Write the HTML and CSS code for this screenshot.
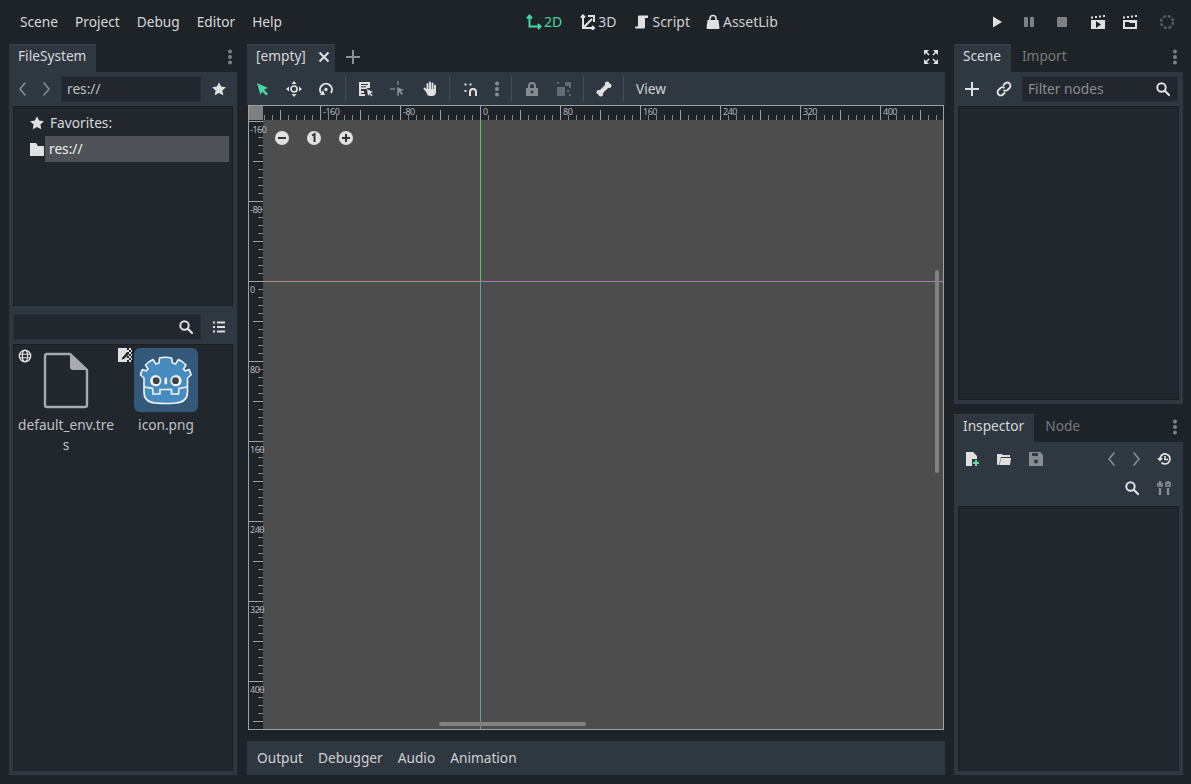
FILE: index.html
```html
<!DOCTYPE html>
<html lang="en">
<head>
  <meta charset="UTF-8" />
  <title>Godot Engine</title>
  <link rel="stylesheet" href="styles.css">
</head>
<body>

<svg class="defs" width="0" height="0">
  <defs>
    <symbol id="i-star" viewBox="0 0 16 16"><path d="M8 1.200l2.100 4.400 4.800.6-3.500 3.300.9 4.800L8 11.900l-4.300 2.400.9-4.800L1.100 6.200l4.800-.6z" fill="#e0e0e0"/></symbol>
    <symbol id="i-search" viewBox="0 0 16 16"><circle cx="6.500" cy="6.500" r="4.200" fill="none" stroke="#e0e0e0" stroke-width="2"/><path d="M9.800 9.800l4.200 4.200" stroke="#e0e0e0" stroke-width="2.200" stroke-linecap="round"/></symbol>
    <symbol id="i-left" viewBox="0 0 16 16"><path d="M10 2L5 8l5 6" fill="none" stroke="#e0e0e0" stroke-width="1.600" stroke-linecap="round" stroke-linejoin="round"/></symbol>
    <symbol id="i-right" viewBox="0 0 16 16"><path d="M6 2l5 6-5 6" fill="none" stroke="#e0e0e0" stroke-width="1.600" stroke-linecap="round" stroke-linejoin="round"/></symbol>
    <symbol id="i-dots" viewBox="0 0 16 16"><circle cx="8" cy="2.600" r="2" fill="#e0e0e0"/><circle cx="8" cy="8" r="2" fill="#e0e0e0"/><circle cx="8" cy="13.400" r="2" fill="#e0e0e0"/></symbol>
    <symbol id="i-arrow" viewBox="0 0 16 16"><path d="M3 2l11 5-4 1.800 4 4-1.800 1.700-4-4L6.500 14z" fill="currentColor"/></symbol>
  </defs>
</svg>

<header class="topbar">
  <nav class="menus">
    <span>Scene</span><span>Project</span><span>Debug</span><span>Editor</span><span>Help</span>
  </nav>
  <nav class="modes">
    <span class="mode active">
      <svg width="16" height="16" viewBox="0 0 16 16"><path d="M3.500 3v9.500H14M1 4.500l2.500-3 2.500 3M12 10l2.500 2.500L12 15" fill="none" stroke="#45d7a0" stroke-width="2"/></svg>2D</span>
    <span class="mode">
      <svg width="16" height="16" viewBox="0 0 16 16"><path d="M3 3v11h11M3 14l9-9M1 3.500L3 1.500l2 2M12 12l2 2-2 2M8 2h6v6" fill="none" stroke="#e0e0e0" stroke-width="2"/></svg>3D</span>
    <span class="mode">
      <svg width="16" height="16" viewBox="0 0 16 16"><path d="M5 1.500h9v2.500h-3v9c0 1-.6 1.500-1.500 1.500H2.500C1.500 15 1 14 1 12.500h3V3c0-1 .3-1.500 1-1.500z" fill="#e0e0e0"/></svg>Script</span>
    <span class="mode">
      <svg width="16" height="16" viewBox="0 0 16 16"><path d="M5 6V4.500a3 3 0 0 1 6 0V6" fill="none" stroke="#e0e0e0" stroke-width="1.600"/><path d="M2.500 6h11l1 8a1 1 0 0 1-1 1h-11a1 1 0 0 1-1-1z" fill="#e0e0e0"/></svg>AssetLib</span>
  </nav>
  <div class="play">
    <svg class="ic" width="16" height="16" viewBox="0 0 16 16"><path d="M4 2.500l9 5.500-9 5.500z" fill="#e0e0e0"/></svg>
    <svg class="ic dim" width="16" height="16" viewBox="0 0 16 16"><rect x="3" y="3" width="4" height="10" rx="1" fill="#e0e0e0"/><rect x="9" y="3" width="4" height="10" rx="1" fill="#e0e0e0"/></svg>
    <svg class="ic dim stop" width="16" height="16" viewBox="0 0 16 16"><rect x="3" y="3" width="10" height="10" rx="1" fill="#e0e0e0"/></svg>
    <svg class="ic movie" width="16" height="16" viewBox="0 0 16 16"><path d="M1 6h14v9H1z" fill="#e0e0e0"/><path d="M6 7l5 3.500L6 14z" fill="#1e2328"/><path d="M1 3.500h2M5 3h2M9 2.500h2M13 2h2" stroke="#e0e0e0" stroke-width="2"/></svg>
    <svg class="ic" width="16" height="16" viewBox="0 0 16 16"><path d="M1 6h14v9H1z" fill="#e0e0e0"/><path d="M3 8h4l1 1h5v4H3z" fill="#1e2328"/><path d="M1 3.500h2M5 3h2M9 2.500h2M13 2h2" stroke="#e0e0e0" stroke-width="2"/></svg>
    <svg class="ic spinner" width="16" height="16" viewBox="0 0 16 16"><circle cx="8" cy="8" r="6" fill="none" stroke="#e0e0e0" stroke-width="2.400" stroke-dasharray="3 1.700"/></svg>
  </div>
</header>

<main class="workspace">
  <section class="dock left-dock">
    <div class="tabs">
      <span class="tab current">FileSystem</span>
      <svg class="dots" width="16" height="16"><use href="#i-dots"/></svg>
    </div>
    <div class="panel fs-panel">
      <div class="fs-path">
        <svg class="ic dim" width="16" height="16"><use href="#i-left"/></svg>
        <svg class="ic dim" width="16" height="16"><use href="#i-right"/></svg>
        <div class="field path-field">res://</div>
        <svg class="ic" width="16" height="16"><use href="#i-star"/></svg>
      </div>
      <div class="well tree">
        <div class="tree-row fav">
          <svg width="16" height="16"><use href="#i-star"/></svg><span>Favorites:</span>
        </div>
        <div class="tree-row res">
          <svg width="16" height="16" viewBox="0 0 16 16"><path d="M1 2h6l2 3h6v10H1z" fill="#e0e0e0"/></svg><span class="sel">res://</span>
        </div>
      </div>
      <div class="fs-search">
        <div class="field search-field">
          <svg width="16" height="16"><use href="#i-search"/></svg>
        </div>
        <svg class="ic" width="16" height="16" viewBox="0 0 16 16"><path d="M2 2.500h2v2H2zM2 7h2v2H2zM2 11.500h2v2H2zM6 2.500h8v2H6zM6 7h8v2H6zM6 11.500h8v2H6z" fill="#e0e0e0"/></svg>
      </div>
      <div class="well files">
        <div class="file">
          <div class="thumb">
            <svg class="badge globe" width="14" height="14" viewBox="0 0 16 16"><circle cx="8" cy="8" r="6.500" fill="none" stroke="#e0e0e0" stroke-width="1.600"/><ellipse cx="8" cy="8" rx="3" ry="6.500" fill="none" stroke="#e0e0e0" stroke-width="1.400"/><path d="M1.500 6h13M1.500 10h13" stroke="#e0e0e0" stroke-width="1.400"/></svg>
            <svg width="64" height="64" viewBox="0 0 64 64"><path d="M13 6h23l17 16v35a2 2 0 0 1-2 2H13a2 2 0 0 1-2-2V8a2 2 0 0 1 2-2z" fill="none" stroke="#a8abae" stroke-width="2.400"/><path d="M36 5l18 17H39a3 3 0 0 1-3-3z" fill="#a8abae"/></svg>
          </div>
          <div class="file-name">default_env.tres</div>
        </div>
        <div class="file">
          <div class="thumb selected">
            <svg class="badge tex" width="14" height="14" viewBox="0 0 14 14"><path d="M0 0h9v14H0z" fill="#e0e0e0"/><path d="M9 2h2v2H9zM11 0h2v2h-2zM11 4h2v2h-2zM9 6h2v2H9zM11 8h2v2h-2zM9 10h2v2H9zM11 12h2v2h-2zM13 2h1v2h-1zM13 6h1v2h-1zM13 10h1v2h-1z" fill="#e0e0e0"/><path d="M4 10l5-6 2 2-5 5-2.500.5z" fill="#21272d"/></svg>
            <svg width="64" height="64" viewBox="0 0 64 64">
              <path d="M25.500 10Q31.500 8.500 37.500 10L38.500 15Q40 15.500 41.500 16L44.500 11.500Q49 13.500 52 17L49.500 21Q50.500 22 51 23L55 21.500Q56.500 24 57 27L53.500 30V44Q53.500 54 42 55Q31.500 56 21 55Q10 54 10 44V30L6.500 27Q7 24 8.500 21.500L12.500 23Q13 22 14 21L11.500 17Q14.500 13.500 19 11.500L22 16Q23.500 15.500 25 15Z" fill="#478cbf" stroke="#f0f4f8" stroke-width="1.600" stroke-linejoin="round"/>
              <path d="M10.500 39L18.500 40.500 19 46H26V41.500H37.500V46H44.500L45 40.500 53 39" fill="none" stroke="#f0f4f8" stroke-width="1.600"/>
              <circle cx="21.700" cy="32.700" r="5.600" fill="#f0f4f8"/><circle cx="42" cy="32.700" r="5.600" fill="#f0f4f8"/>
              <circle cx="22.200" cy="32.700" r="3.400" fill="#414042"/><circle cx="41.500" cy="32.700" r="3.400" fill="#414042"/>
              <rect x="30.500" y="29.500" width="2.600" height="7" rx="1.300" fill="#f0f4f8"/>
            </svg>
          </div>
          <div class="file-name">icon.png</div>
        </div>
      </div>
    </div>
  </section>

  <section class="center">
    <div class="tabs scene-tabs">
      <span class="tab current">[empty]<svg class="close" width="12" height="12" viewBox="0 0 12 12"><path d="M1.500 1.500l9 9M10.500 1.500l-9 9" stroke="#e0e0e0" stroke-width="2"/></svg></span>
      <svg class="ic add-tab" width="16" height="16" viewBox="0 0 16 16"><path d="M8 1v14M1 8h14" stroke="#8c9094" stroke-width="2"/></svg>
      <svg class="fullscreen" width="16" height="16" viewBox="0 0 16 16"><path d="M1 1h5L1 6zM15 1v5l-5-5zM1 15v-5l5 5zM15 15h-5l5-5z" fill="#e0e0e0"/><path d="M3 3l3 3M13 3l-3 3M3 13l3-3M13 13l-3-3" stroke="#e0e0e0" stroke-width="1.500"/></svg>
    </div>
    <div class="toolbar">
      <svg class="ic green" width="16" height="16"><use href="#i-arrow"/></svg>
      <svg class="ic" width="16" height="16" viewBox="0 0 16 16"><path d="M8 0l2.500 3h-5zM8 16l-2.500-3h5zM0 8l3-2.500v5zM16 8l-3 2.500v-5z" fill="#e0e0e0"/><circle cx="8" cy="8" r="3" fill="none" stroke="#e0e0e0" stroke-width="1.700"/></svg>
      <svg class="ic" width="16" height="16" viewBox="0 0 16 16"><path d="M3 12A6 6 0 1 1 13 12" fill="none" stroke="#e0e0e0" stroke-width="2"/><path d="M5 9l-3 5h5z" fill="#e0e0e0"/><circle cx="8" cy="8.500" r="1.700" fill="#e0e0e0"/></svg>
      <i class="sep"></i>
      <svg class="ic" width="16" height="16" viewBox="0 0 16 16"><path d="M1 1h11v6H9v1H3v2h3v2H3v1h4v2H1z" fill="#e0e0e0"/><path d="M3 3.500h7M3 5.800h5" stroke="#2f3840" stroke-width="1"/><path d="M9 8l6 3-2.500 1 2 2.500-1 1-2-2.500-1.500 2z" fill="#e0e0e0"/></svg>
      <svg class="ic dim" width="16" height="16" viewBox="0 0 16 16"><path d="M7 0h2v4H7zM0 7h5v2H0zM7 11h2v4H7z" fill="#a0a4a8"/><path d="M7 6l7 3-3 1 2 3-1.500 1-2-3-2 2z" fill="#e0e0e0"/></svg>
      <svg class="ic" width="16" height="16" viewBox="0 0 16 16"><path d="M5.500 9V3M8 9V1.500M10.500 9V2.500M13 9V4.500M2.500 7.500L6 11.500" stroke="#e0e0e0" stroke-width="1.900" stroke-linecap="round"/><path d="M4.500 8h9.500v3c0 2.500-1.500 4-4 4H8c-2 0-3.500-1.500-3.500-4z" fill="#e0e0e0"/></svg>
      <i class="sep"></i>
      <svg class="ic snap" width="16" height="16" viewBox="0 0 16 16"><path d="M7 15V11a3 3 0 0 1 6 0v4" fill="none" stroke="#e0e0e0" stroke-width="2"/><path d="M1.500 2.500h2v2h-2zM6.500 2.500h2v2h-2zM1.500 9h2v2h-2z" fill="#e0e0e0"/></svg>
      <svg class="ic dim menu-dots" width="16" height="16"><use href="#i-dots"/></svg>
      <i class="sep"></i>
      <svg class="ic dim" width="16" height="16" viewBox="0 0 16 16"><path d="M5 7V5a3 3 0 0 1 6 0v2" fill="none" stroke="#e0e0e0" stroke-width="2"/><path d="M2 7h12v8H2z" fill="#e0e0e0"/><circle cx="8" cy="11" r="1.500" fill="#2f3840"/></svg>
      <svg class="ic dimmer" width="16" height="16" viewBox="0 0 16 16"><path d="M1 1h2v2H1zM9 1h6v6h-2V5H9zM1 6h8v9H1zM13 13h2v2h-2zM11 9h2v2h-2z" fill="#e0e0e0"/></svg>
      <i class="sep"></i>
      <svg class="ic" width="16" height="16" viewBox="0 0 16 16"><path d="M4.500 11.500l7-7" stroke="#e0e0e0" stroke-width="4.500"/><circle cx="2.800" cy="11.200" r="2.300" fill="#e0e0e0"/><circle cx="4.800" cy="13.200" r="2.300" fill="#e0e0e0"/><circle cx="11.200" cy="2.800" r="2.300" fill="#e0e0e0"/><circle cx="13.200" cy="4.800" r="2.300" fill="#e0e0e0"/></svg>
      <i class="sep"></i>
      <span class="view-btn">View</span>
    </div>
    <div class="viewport">
      <svg class="canvas" width="694" height="623" viewBox="0 0 694 623">
        <defs>
          <pattern id="tick-h" x="0" y="0" width="80" height="14" patternUnits="userSpaceOnUse" patternTransform="translate(231 0)">
            <path d="M.5 0v14" stroke="#9da1a4"/>
            <path d="M8.500 9v5M16.500 9v5M24.500 9v5M32.500 9v5M48.500 9v5M56.500 9v5M64.500 9v5M72.500 9v5" stroke="#80858a"/>
            <path d="M40.500 4v10" stroke="#9da1a4"/>
          </pattern>
          <pattern id="tick-v" x="0" y="0" width="14" height="80" patternUnits="userSpaceOnUse" patternTransform="translate(0 175)">
            <path d="M0 .5h14" stroke="#9da1a4"/>
            <path d="M9 8.500h5M9 16.500h5M9 24.500h5M9 32.500h5M9 48.500h5M9 56.500h5M9 64.500h5M9 72.500h5" stroke="#80858a"/>
            <path d="M4 40.500h10" stroke="#9da1a4"/>
          </pattern>
        </defs>
        <rect width="694" height="623" fill="#4d4d4d"/>
        <rect x="0" y="14" width="14" height="609" fill="#1f2429"/>
        <rect x="0" y="14" width="14" height="609" fill="url(#tick-v)"/>
        <rect width="694" height="14" fill="#1f2429"/>
        <rect width="694" height="14" fill="url(#tick-h)"/>
        <rect width="14" height="14" fill="#7d7f81"/>
        <path d="M14 175.500h217" stroke="#b08a86"/>
        <path d="M231 175.500h463" stroke="#a87fae"/>
        <path d="M231.500 14v161" stroke="#57c457"/>
        <path d="M231.500 176v447" stroke="#5f9fa6"/>
        <g class="ruler-h">
          <text x="74" y="9">-160</text><text x="154" y="9">-80</text><text x="234" y="9">0</text><text x="314" y="9">80</text><text x="394" y="9">160</text><text x="474" y="9">240</text><text x="554" y="9">320</text><text x="634" y="9">400</text>
        </g>
        <g class="ruler-v">
          <text x="1" y="27">-160</text><text x="1" y="107">-80</text><text x="1" y="187">0</text><text x="1" y="267">80</text><text x="1" y="347">160</text><text x="1" y="427">240</text><text x="1" y="507">320</text><text x="1" y="587">400</text>
        </g>
        <rect x="190" y="616" width="147" height="4" rx="2" fill="#828282"/>
        <rect x="686" y="164" width="4" height="203" rx="2" fill="#828282"/>
      </svg>
      <div class="zoom-btns">
        <svg width="16" height="16" viewBox="0 0 16 16"><circle cx="8" cy="8" r="7" fill="#e0e0e0"/><path d="M4 8h8" stroke="#333" stroke-width="2"/></svg>
        <svg width="16" height="16" viewBox="0 0 16 16"><circle cx="8" cy="8" r="7" fill="#e0e0e0"/><path d="M6 5.500l2.500-1.500v8" fill="none" stroke="#333" stroke-width="2"/></svg>
        <svg width="16" height="16" viewBox="0 0 16 16"><circle cx="8" cy="8" r="7" fill="#e0e0e0"/><path d="M4 8h8M8 4v8" stroke="#333" stroke-width="2"/></svg>
      </div>
    </div>
    <div class="bottom-panel">
      <span>Output</span><span>Debugger</span><span>Audio</span><span>Animation</span>
    </div>
  </section>

  <section class="dock right-dock">
    <div class="scene-dock">
      <div class="tabs">
        <span class="tab current">Scene</span><span class="tab">Import</span>
        <svg class="dots" width="16" height="16"><use href="#i-dots"/></svg>
      </div>
      <div class="panel">
        <div class="scene-tools">
          <svg class="ic" width="16" height="16" viewBox="0 0 16 16"><path d="M8 1v14M1 8h14" stroke="#e0e0e0" stroke-width="2"/></svg>
          <svg class="ic" width="16" height="16" viewBox="0 0 16 16"><path d="M7 4.500l2-2a3 3 0 0 1 4.500 4.500l-2 2a3 3 0 0 1-4 0M9 11.500l-2 2A3 3 0 0 1 2.500 9l2-2a3 3 0 0 1 4 0" fill="none" stroke="#e0e0e0" stroke-width="1.800"/></svg>
          <div class="field filter-field"><span>Filter nodes</span><svg width="16" height="16"><use href="#i-search"/></svg></div>
        </div>
        <div class="well grow"></div>
      </div>
    </div>
    <div class="inspector-dock">
      <div class="tabs">
        <span class="tab current">Inspector</span><span class="tab">Node</span>
        <svg class="dots" width="16" height="16"><use href="#i-dots"/></svg>
      </div>
      <div class="panel">
        <div class="insp-row">
          <svg class="ic" width="16" height="16" viewBox="0 0 16 16"><path d="M2 1h7l4 4v3H8v7H2z" fill="#e0e0e0"/><path d="M12 9v6M9 12h6" stroke="#5fe29c" stroke-width="2"/></svg>
          <svg class="ic" width="16" height="16" viewBox="0 0 16 16"><path d="M1 3h5l1 1h7v2H5L3 14H2a1 1 0 0 1-1-1z" fill="#e0e0e0"/><path d="M5 7h10l-1 7H3.500z" fill="#e0e0e0"/></svg>
          <svg class="ic dim" width="16" height="16" viewBox="0 0 16 16"><path d="M1 1h11l3 3v11H1z" fill="#e0e0e0"/><path d="M4 2h6v3H4z" fill="#2f3840"/><circle cx="8" cy="10.500" r="2" fill="#2f3840"/></svg>
          <span class="spring"></span>
          <svg class="ic dim" width="16" height="16"><use href="#i-left"/></svg>
          <svg class="ic dim hist-next" width="16" height="16"><use href="#i-right"/></svg>
          <svg class="ic hist" width="16" height="16" viewBox="0 0 16 16"><path d="M4 8a5 5 0 1 1 1.500 3.500" fill="none" stroke="#e0e0e0" stroke-width="1.800"/><path d="M1 7h6l-3 3.500z" fill="#e0e0e0"/><path d="M9 5v3.500h3" fill="none" stroke="#e0e0e0" stroke-width="1.600"/></svg>
        </div>
        <div class="insp-row second">
          <span class="spring"></span>
          <svg class="ic" width="16" height="16"><use href="#i-search"/></svg>
          <svg class="ic dim" width="16" height="16" viewBox="0 0 16 16"><path d="M4 1v4M4 8v7M12 1v3M12 8v7" stroke="#e0e0e0" stroke-width="2.400"/><path d="M2 3v3h4V3M10 2v4h4V2" fill="none" stroke="#e0e0e0" stroke-width="1.600"/></svg>
        </div>
        <div class="well grow"></div>
      </div>
    </div>
  </section>
</main>

</body>
</html>
```
FILE: styles.css
```css
html, body {
  height: 100%;
}
body {
  margin: 0;
  width: 1191px;
  height: 784px;
  overflow: hidden;
  background: #1e2328;
  color: #e0e0e0;
  font-family: "Noto Sans", sans-serif;
  font-size: 13.7px;
  line-height: 20px;
  display: flex;
  flex-direction: column;
}
svg {
  display: block;
  flex: none;
}
.defs {
  position: absolute;
}
.ic {
  color: #e0e0e0;
}
.dim {
  opacity: 0.5;
}
.dimmer {
  opacity: 0.3;
}
.green {
  color: #45d7a0;
}

/* top bar */
.topbar {
  height: 44px;
  box-sizing: border-box;
  padding-bottom: 1px;
  display: grid;
  grid-template-columns: 526px auto 1fr;
  align-items: center;
  flex: none;
}
.menus {
  display: flex;
  gap: 17px;
  padding-left: 20px;
  color: #d6d7d9;
}
.modes {
  display: flex;
  gap: 18px;
  font-size: 14px;
  color: #cfd0d2;
}
.mode {
  display: flex;
  align-items: center;
  gap: 2px;
}
.mode:last-child {
  margin-left: -3px;
}
.mode.active {
  color: #45d7a0;
}
.play {
  display: flex;
  justify-content: flex-end;
  gap: 16px;
  padding-right: 16px;
}
.stop {
  margin-left: 1px;
}
.movie {
  margin-left: 4px;
}
.spinner {
  margin-left: 5px;
  opacity: 0.3;
}

/* main columns */
.workspace {
  flex: 1;
  display: grid;
  grid-template-columns: 228px 699px 229px;
  column-gap: 9px;
  padding: 0 8px 9px 9px;
  min-height: 0;
}
.dock, .center {
  display: flex;
  flex-direction: column;
  min-height: 0;
}
.center {
  padding-left: 1px;
}
.tabs {
  height: 28px;
  display: flex;
  align-items: stretch;
  flex: none;
}
.tab {
  padding: 2px 10px 0 9px;
  height: 28px;
  box-sizing: border-box;
  color: #77797c;
}
.tab + .tab {
  padding-left: 11px;
}
.tab.current {
  background: #2f3840;
  color: #d6d7d9;
  box-shadow: inset 0 1px 0 #3a434b;
}
.dots {
  margin: 5px 0 0 auto;
  opacity: 0.5;
}
.panel {
  flex: 1;
  background: #2f3840;
  display: flex;
  flex-direction: column;
  padding: 4px;
  min-height: 0;
}
.well {
  background: #21272d;
  border: 1px solid #1a1f23;
}
.grow {
  flex: 1;
}
.field {
  background: #21272d;
  border: 1px solid #272e35;
  box-sizing: border-box;
  height: 26px;
  color: #c0c2c4;
  display: flex;
  align-items: center;
  padding: 0 5px;
}

/* filesystem dock */
.left-dock .dots {
  margin-right: -1px;
}
.fs-path {
  display: flex;
  align-items: center;
  gap: 7px;
  height: 26px;
  padding-left: 2px;
}
.path-field {
  width: 140px;
  margin-right: 3px;
}
.tree {
  height: 200px;
  margin-top: 4px;
  box-sizing: border-box;
  padding: 3px 3px 0 15px;
}
.tree-row {
  display: flex;
  align-items: center;
  height: 26px;
  color: #d6d7d9;
}
.fav {
  gap: 5px;
}
.res .sel {
  flex: 1;
  background: #4f5357;
  height: 26px;
  line-height: 25px;
  padding-left: 4px;
  color: #eee;
}
.fs-search {
  display: flex;
  align-items: center;
  gap: 10px;
  margin-top: 8px;
  height: 26px;
}
.search-field {
  width: 188px;
  justify-content: flex-end;
  padding-right: 6px;
}
.files {
  flex: 1;
  margin-top: 4px;
  padding: 3px 0 0 4px;
  display: flex;
  gap: 4px;
}
.file {
  width: 96px;
  text-align: center;
  color: #bfc1c3;
  word-break: break-all;
}
.thumb {
  width: 64px;
  height: 64px;
  margin: 0 auto 3px;
  position: relative;
  border-radius: 6px;
}
.thumb.selected {
  background: #33587a;
}
.badge {
  position: absolute;
}
.globe {
  left: -16px;
  top: 1px;
}
.tex {
  left: -16px;
  top: 0;
}

/* center */
.scene-tabs {
  align-items: flex-start;
}
.scene-tabs .tab {
  display: flex;
  gap: 12px;
  align-items: flex-start;
  padding-right: 5px;
}
.close {
  margin-top: 5px;
}
.add-tab {
  margin: 5px 0 0 10px;
}
.fullscreen {
  margin: 5px 6px 0 auto;
}
.toolbar {
  height: 33px;
  background: #2f3840;
  display: flex;
  align-items: center;
  gap: 16px;
  padding-left: 7px;
  flex: none;
}
.sep {
  width: 1px;
  height: 26px;
  background: #454d55;
  margin: 0 -4px 0 -5px;
}
.snap {
  margin-left: 1px;
}
.menu-dots {
  margin: 0 -5px 0 -6px;
}
.view-btn {
  color: #cfd0d2;
}
.viewport {
  width: 694px;
  height: 623px;
  margin-left: 1px;
  border: 1px solid #9da1a4;
  position: relative;
  flex: none;
}
.canvas text {
  fill: #b4b6b8;
  font-family: "Noto Sans", sans-serif;
  font-size: 9px;
  letter-spacing: -0.5px;
}
.zoom-btns {
  position: absolute;
  top: 24px;
  left: 25px;
  display: flex;
  gap: 16px;
}
.bottom-panel {
  margin-top: 11px;
  height: 34px;
  background: #2f3840;
  box-sizing: border-box;
  display: flex;
  align-items: center;
  gap: 15px;
  padding-left: 10px;
  color: #cfd0d2;
  flex: none;
}

/* right dock */
.right-dock {
  gap: 10px;
}
.scene-dock {
  height: 360px;
  display: flex;
  flex-direction: column;
  flex: none;
}
.inspector-dock {
  flex: 1;
  display: flex;
  flex-direction: column;
  min-height: 0;
}
.scene-tools {
  display: flex;
  align-items: center;
  gap: 16px;
  height: 26px;
  padding: 0 1px 0 6px;
  margin-bottom: 4px;
}
.filter-field {
  flex: 1;
  justify-content: space-between;
  margin-left: -6px;
  padding-right: 6px;
  color: #8a8d90;
}
.insp-row {
  display: flex;
  align-items: center;
  gap: 16px;
  height: 26px;
  padding: 0 7px 0 6px;
  flex: none;
}
.insp-row.second {
  margin: 3px 0 5px;
}
.hist-next {
  margin-left: -8px;
}
.hist {
  margin-left: -4px;
}
.spring {
  flex: 1;
}
```
